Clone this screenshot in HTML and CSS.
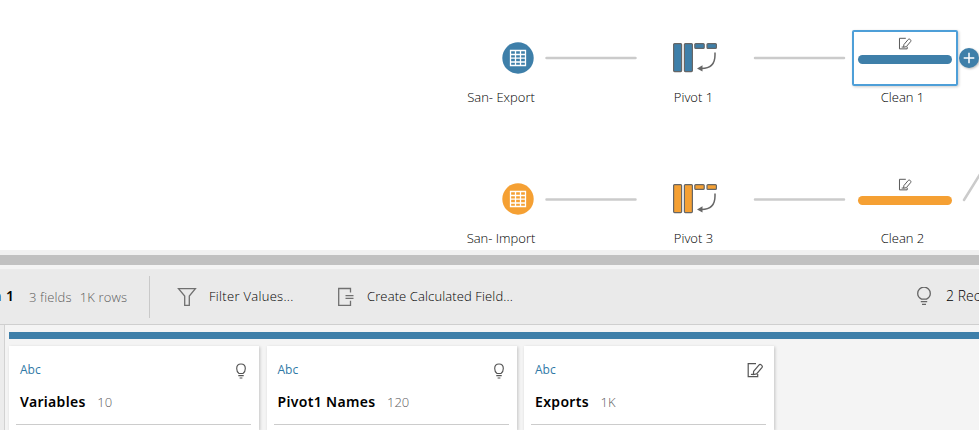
FILE: index.html
```html
<!DOCTYPE html>
<html lang="en">
<head>
<meta charset="utf-8">
<title>Flow</title>
<link rel="stylesheet" href="styles.css">
</head>
<body>
<svg class="defs" width="0" height="0" aria-hidden="true">
  <symbol id="table" viewBox="0 0 32 32">
    <circle cx="16" cy="16" r="15.7" fill="currentColor"/>
    <path d="M8.500 8.500h15v15h-15zM13.500 8.500v15M18.500 8.500v15M8.500 12.500h15M8.500 16.200h15M8.500 20h15" fill="none" stroke="#fff" stroke-width="1.300"/>
  </symbol>
  <symbol id="pivot" viewBox="0 0 46 32">
    <g fill="currentColor" stroke="#666" stroke-width="1.2">
      <rect x="1.6" y="1.6" width="8" height="28" rx="1"/>
      <rect x="12.4" y="1.6" width="8" height="28" rx="1"/>
      <rect x="22.8" y="1.6" width="9.4" height="4.8" rx="1"/>
      <rect x="35" y="1.6" width="9.4" height="4.8" rx="1"/>
    </g>
    <path d="M43 10.500v2.500c0 8-4 13.500-13.500 13.500" fill="none" stroke="#666" stroke-width="1.500"/>
    <path d="M25 26.400l5.500-3.200v6.200z" fill="#666"/>
  </symbol>
  <symbol id="edit" viewBox="0 0 16 16">
    <g fill="none" stroke="#555" stroke-width="1.200">
      <path d="M9 1.600H1.200v13h9.500v-2.600"/>
      <path d="M6.600 9.400l5.300-6.300c1.500-1.600 4.400.7 3 2.600L9.600 11.900 6.400 12.600z"/>
      <path d="M3.900 12.400h2.500"/>
    </g>
  </symbol>
  <symbol id="bulb" viewBox="0 0 16 20">
    <g fill="none" stroke="#666" stroke-width="1.300">
      <path d="M5.500 13.100C3.500 12 1.700 10.300 1.700 7.400a6.300 6.300 0 0 1 12.600 0c0 2.900-1.800 4.600-3.800 5.700z"/>
      <path d="M4.800 15.700h6.400M6 18.300h4"/>
    </g>
  </symbol>
  <symbol id="bulb-small" viewBox="0 0 12 18">
    <g fill="none" stroke="#555" stroke-width="1.150">
      <path d="M4 11.500C2.500 10.500 1.700 9 1.700 6.500c0-6 8.600-6 8.600 0 0 2.500-.8 4-2.300 5z"/>
      <path d="M3.300 13.600h5.400M4.600 16h2.800"/>
    </g>
  </symbol>
</svg>

<main class="canvas">
  <svg class="links" width="979" height="250" aria-hidden="true">
    <path d="M546.500 58h89M755 58h89M546.500 199.500h89M755 199.500h89M964 200L982 171"/>
  </svg>

  <div class="node input blue" style="left:441px;top:42px">
    <svg class="dot"><use href="#table"/></svg><span class="label">San- Export</span>
  </div>
  <div class="node blue" style="left:633px;top:42px">
    <svg class="pivot"><use href="#pivot"/></svg><span class="label">Pivot 1</span>
  </div>
  <div class="node selected blue" style="left:852px;top:30px">
    <div class="step"><svg class="pen"><use href="#edit"/></svg><i class="bar"></i></div><span class="label">Clean 1</span>
  </div>
  <svg class="add" viewBox="0 0 20 20"><circle cx="10" cy="10" r="10"/><path d="M4.700 10h10.600M10 4.700v10.600"/></svg>

  <div class="node input orange" style="left:441px;top:183px">
    <svg class="dot"><use href="#table"/></svg><span class="label">San- Import</span>
  </div>
  <div class="node orange" style="left:633px;top:183px">
    <svg class="pivot"><use href="#pivot"/></svg><span class="label">Pivot 3</span>
  </div>
  <div class="node orange" style="left:852px;top:171px">
    <div class="step"><svg class="pen"><use href="#edit"/></svg><i class="bar"></i></div><span class="label">Clean 2</span>
  </div>
</main>

<div class="splitter"></div>

<header class="toolbar">
  <div class="summary"><strong>Clean 1</strong><span class="fields">3 fields</span><span class="rows">1K rows</span></div>
  <div class="action filter">
    <svg width="20" height="20" viewBox="0 0 20 20"><path d="M1.500 1.600h16.900L12.300 9v9.400H7.700V9z"/></svg><span>Filter Values...</span>
  </div>
  <div class="action calc">
    <svg width="18" height="20" viewBox="0 0 18 20"><path d="M13.500 5.500v-4H1.700v16.800h11.800v-4.500M8.500 8.600h8M8.500 11.300h8"/></svg><span>Create Calculated Field...</span>
  </div>
  <div class="advice"><svg width="16" height="20"><use href="#bulb"/></svg><span>2 Recommendations</span></div>
</header>

<section class="profile">
  <div class="step-bar"></div>
  <div class="cards">
    <article class="card">
      <div class="top"><span>Abc</span><svg width="12" height="18"><use href="#bulb-small"/></svg></div>
      <h2><b>Variables</b><small>10</small></h2>
    </article>
    <article class="card">
      <div class="top"><span>Abc</span><svg width="12" height="18"><use href="#bulb-small"/></svg></div>
      <h2><b>Pivot1 Names</b><small>120</small></h2>
    </article>
    <article class="card">
      <div class="top"><span>Abc</span><svg class="changed" width="16" height="16"><use href="#edit"/></svg></div>
      <h2><b>Exports</b><small>1K</small></h2>
    </article>
  </div>
</section>
</body>
</html>
```
FILE: styles.css
```css
* { box-sizing: border-box; }
body {
  margin: 0;
  width: 979px;
  height: 430px;
  overflow: hidden;
  display: flex;
  flex-direction: column;
  background: #fff;
  color: #000;
  font: 300 13px/18px "Open Sans", "Noto Sans", sans-serif;
}
svg { display: block; flex: none; }
.defs { position: absolute; }
.blue { color: #3e7fa9; }
.orange { color: #f5a033; }

.canvas { position: relative; height: 250px; flex: none; overflow: hidden; }
.links { position: absolute; left: 0; top: 0; fill: none; stroke: #cbcbcb; stroke-width: 2.5; stroke-linecap: round; }
.node { position: absolute; width: 120px; display: flex; flex-direction: column; align-items: center; }
.dot { width: 32px; height: 32px; margin-left: 34.5px; }
.pivot { width: 46px; height: 32px; margin-left: 3px; }
.label { margin-top: 14px; margin-left: 1px; color: #000; white-space: nowrap; }
.input .label { margin-left: 0; }
.step {
  width: 106px;
  height: 56px;
  padding-top: 5px;
  margin-left: -15px;
  border: 2px solid transparent;
  border-radius: 2px;
  display: flex;
  flex-direction: column;
  align-items: center;
}
.step + .label { margin-top: 2px; margin-left: -19px; }
.selected .step { border-color: #4e9fd8; box-shadow: 1px 1px 3px #0003; }
.pen { width: 14px; height: 13px; }
.bar { width: 94px; height: 9px; margin-top: 4.5px; border-radius: 5px; background: currentColor; flex: none; }
.add { position: absolute; left: 959px; top: 48px; width: 20px; height: 20px; overflow: visible; fill: #3e7fa9; filter: drop-shadow(1px 1px 1px #0004); }
.add path { fill: none; stroke: #fff; stroke-width: 1.5; }

.splitter { height: 19px; flex: none; background: #c0c0c0; border-top: 5px solid #f0f0f0; border-bottom: 4px solid #f3f3f3; }

.toolbar { height: 56px; flex: none; display: flex; align-items: center; background: #eaeaea; border-bottom: 1px solid #cfcfcf; white-space: nowrap; }
.summary { width: 150px; height: 42px; display: flex; align-items: center; border-right: 1px solid #c9c9c9; flex: none; }
.summary strong { width: 14px; margin-top: -2px; display: flex; justify-content: flex-end; font: 600 14px/18px "Noto Sans", sans-serif; word-spacing: 1px; }
.summary span { color: #5c5c5c; letter-spacing: .15px; }
.fields { margin-left: 15px; }
.rows { margin-left: 8px; }
.action { display: flex; align-items: center; }
.action svg { fill: none; stroke: #707070; stroke-width: 1.3; }
.action span, .advice span { margin-top: -2px; }
.filter { width: 187px; padding-left: 27px; gap: 12px; }
.filter span { letter-spacing: .3px; }
.calc { gap: 12px; }
.calc span { letter-spacing: .12px; }
.advice { margin-left: auto; width: 63px; overflow: hidden; display: flex; align-items: center; gap: 14px; font-size: 14px; }
.advice svg { margin-top: -1px; }

.profile { flex: 1; min-height: 0; margin-left: 4px; padding: 7px 0 0 4px; border-left: 1px solid #d2d2d2; background: #f4f4f4; box-shadow: -4px 0 #ececec; }
.step-bar { height: 7px; background: #3e7fa9; }
.cards { display: flex; gap: 7.5px; margin-top: 7px; }
.card { width: 250px; height: 84px; flex: none; padding: 15px 8px 0 7px; background: #fff; box-shadow: 1px 1px 3px #0003; }
.top { height: 18px; display: flex; justify-content: space-between; padding: 0 4px; color: #3079a6; font-size: 12px; font-weight: 400; }
.top span { line-height: 18px; }
.top svg { margin-top: 1px; }
.top .changed { margin-right: -1px; }
.card h2 { margin: 0; height: 46px; padding: 13px 4px 0; display: flex; gap: 11.5px; border-bottom: 1px solid #ccc; font-size: 14px; line-height: 20px; }
.card b { font: 600 14px/20px "Noto Sans", sans-serif; letter-spacing: .33px; }
.card small { font-size: 13px; font-weight: 300; color: #5c5c5c; }
```
